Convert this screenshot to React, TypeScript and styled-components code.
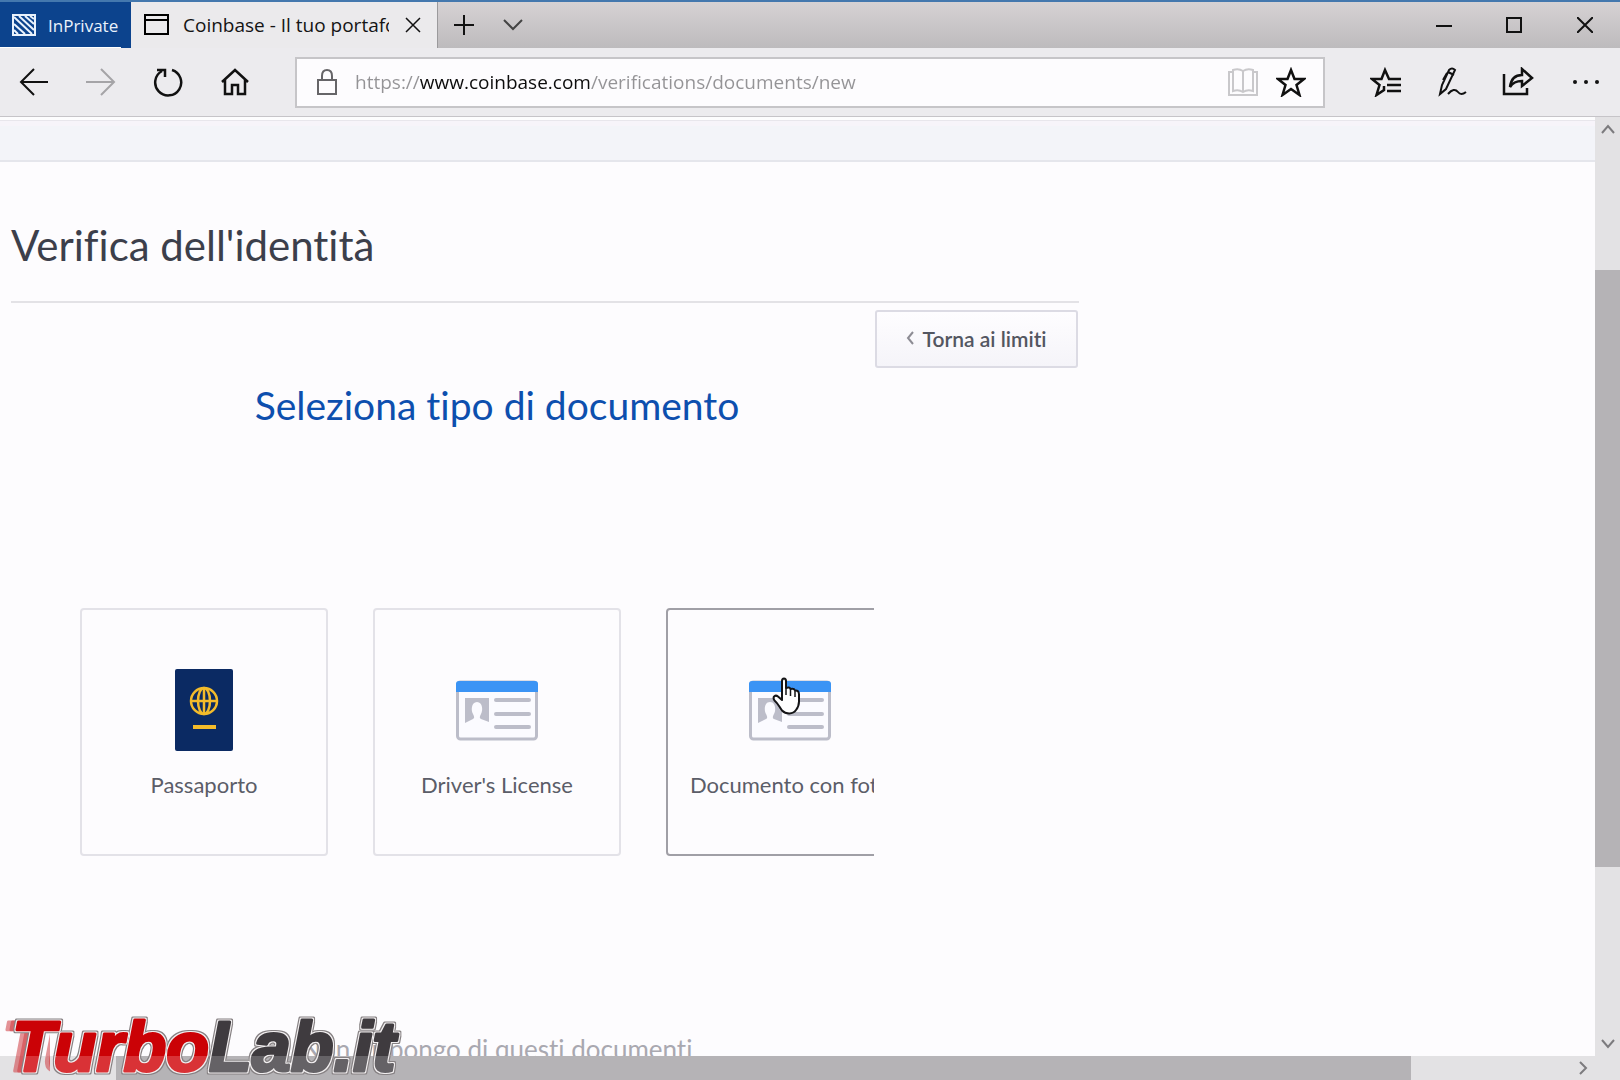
import React from "react";
import styled, { createGlobalStyle, css } from "styled-components";

const uiFont = `"Open Sans", "Noto Sans", sans-serif`;
const pageFont = `Lato, "Open Sans", sans-serif`;

const GlobalStyle = createGlobalStyle`
  *, *::before, *::after { box-sizing: border-box; }
  body { margin: 0; background: #fdfcfe; font-family: ${uiFont}; overflow: hidden; }
  button { font: inherit; color: inherit; cursor: pointer; }
  svg { display: block; flex: none; }
`;

const Window = styled.div`
  height: 100vh;
  display: flex;
  flex-direction: column;
`;

const TabBar = styled.header`
  display: flex;
  height: 48px;
  flex: none;
  border-top: 2px solid #4478ae;
  background: linear-gradient(#d6d2d4, #bdbbbd);
`;

const PrivateBadge = styled.div`
  width: 131px;
  display: flex;
  align-items: center;
  gap: 12px;
  padding: 0 0 0 12px;
  background: linear-gradient(#ffffff, #ffffff) left bottom / 121px 1px no-repeat #0c438d;
  color: #e9f2fc;
  font-size: 17px;
`;

const Tab = styled.div`
  width: 307px;
  display: flex;
  align-items: center;
  padding: 0 15px 0 13px;
  background: #ebeaec;
  border-right: 1px solid #9b9a9c;
`;

const TabTitle = styled.span`
  flex: 1;
  margin: 0 15px 0 14px;
  overflow: hidden;
  white-space: nowrap;
  font-size: 19px;
  line-height: 28px;
  color: #141414;
`;

const IconButton = styled.button<{ $w?: number; $tone?: string }>`
  display: flex;
  align-items: center;
  justify-content: center;
  width: ${(p) => p.$w ?? 32}px;
  height: 100%;
  flex: none;
  padding: 0;
  border: 0;
  background: none;
  color: ${(p) => p.$tone ?? "#111"};
`;

const WindowControls = styled.div`
  display: flex;
  margin-left: auto;
`;

const Toolbar = styled.nav`
  display: flex;
  align-items: center;
  height: 69px;
  flex: none;
  background: #ecebee;
  border-bottom: 1px solid #c6c4c8;
`;

const ToolGroup = styled.div`
  display: flex;
  height: 100%;
`;

const AddressBox = styled.label`
  flex: 1;
  display: flex;
  align-items: center;
  height: 51px;
  margin: 0 27px;
  padding: 0 8px 0 20px;
  background: #fdfcfe;
  border: 2px solid #c6c5c8;
`;

const AddressInput = styled.input`
  flex: 1;
  min-width: 0;
  margin-left: 18px;
  padding: 0;
  border: 0;
  outline: 0;
  font-family: ${uiFont};
  font-size: 19px;
  line-height: 32px;
  color: transparent;
  background: linear-gradient(to right, #949396 65px, #0c0c0c 65px, #0c0c0c 236px, #949396 236px);
  -webkit-background-clip: text;
  background-clip: text;
`;

const Viewport = styled.div`
  flex: 1;
  min-height: 0;
  display: grid;
  grid-template-columns: minmax(0, 1fr) 25px;
  grid-template-rows: minmax(0, 1fr) 24px;
`;

const Page = styled.main`
  overflow: hidden;
  font-family: ${pageFont};
  font-variant-ligatures: none;
  background: #fdfcfe;
`;

const SubHeader = styled.div`
  height: 45px;
  border-top: 3px solid #fdfdfe;
  border-bottom: 2px solid #e5e6ec;
  background: linear-gradient(#e8e6ec 1px, #f7f4fa 1px, #f7f4fa 6px, #f3f4f9 6px);
`;

const Account = styled.section`
  max-width: 1079px;
  padding: 0 0 0 11px;
`;

const Title = styled.h1`
  margin: 0;
  padding: 55px 0 28px;
  border-bottom: 2px solid #e3e2e6;
  font-size: 42px;
  line-height: 56px;
  font-weight: 400;
  color: #3c3f4b;
`;

const Body = styled.div`
  display: flex;
  gap: 1px;
`;

const Panel = styled.div`
  width: 863px;
  flex: none;
  overflow: hidden;
`;

const PanelInner = styled.div`
  width: 972px;
  display: flex;
  flex-direction: column;
  align-items: center;
`;

const StepTitle = styled.h2`
  margin: 76px 0 0;
  font-size: 39px;
  line-height: 52px;
  font-weight: 400;
  color: #0d4fae;
`;

const Options = styled.div`
  display: flex;
  gap: 45px;
  margin-top: 177px;
`;

const Option = styled.button<{ $hovered?: boolean }>`
  width: 248px;
  height: 248px;
  display: flex;
  flex-direction: column;
  align-items: center;
  padding: 59px 0 0;
  background: #fdfcfe;
  border: 2px solid ${(p) => (p.$hovered ? "#a09fa6" : "#e3e2e8")};
  border-radius: 4px;
`;

const OptionLabel = styled.span`
  margin-top: 18px;
  font-size: 22px;
  line-height: 32px;
  white-space: nowrap;
  color: #5b5d68;
`;

const Glyph = styled.span`
  position: relative;
  height: 82px;
  display: flex;
  align-items: center;
`;

const Cursor = styled.svg`
  position: absolute;
  left: 23px;
  top: 8px;
`;

const NoDocuments = styled.a`
  margin-top: 177px;
  font-size: 26px;
  line-height: 32px;
  color: #a9a8b0;
  text-decoration: none;
  white-space: nowrap;
`;

const BackLink = styled.button`
  width: 203px;
  height: 58px;
  margin-top: 7px;
  display: flex;
  align-items: center;
  justify-content: center;
  gap: 8px;
  padding: 0 0 2px;
  border: 2px solid #dcdbe4;
  border-radius: 3px;
  background: linear-gradient(#fefdff, #f5f4f9);
  font-size: 21px;
  font-weight: 600;
  color: #535661;
`;

const track = css`
  display: flex;
  background: #e3e2e4;
`;

const VerticalTrack = styled.div`
  ${track}
  flex-direction: column;
`;

const HorizontalTrack = styled.div`
  ${track}
  grid-column: 1 / 3;
  padding-right: 25px;
`;

const Thumb = styled.div<{ $grow: number }>`
  flex: ${(p) => p.$grow} 0 0;
  background: #b5b3b6;
`;

const Space = styled.div<{ $grow: number }>`
  flex: ${(p) => p.$grow} 0 0;
`;

const ScrollButton = styled.button`
  display: flex;
  align-items: center;
  justify-content: center;
  width: 25px;
  height: 24px;
  flex: none;
  padding: 0;
  border: 0;
  background: none;
  color: #7c7b7e;
`;

const Watermark = styled.svg`
  position: fixed;
  left: 0;
  bottom: 0;
  pointer-events: none;
`;

type IconProps = { w: number; h: number; sw?: number; children: React.ReactNode };

const Icon = ({ w, h, sw = 2, children }: IconProps) => (
  <svg width={w} height={h} viewBox={`0 0 ${w} ${h}`} fill="none" stroke="currentColor" strokeWidth={sw} aria-hidden="true">
    {children}
  </svg>
);

const Chevron = ({ d }: { d: string }) => (
  <Icon w={16} h={16} sw={2}>
    <path d={d} />
  </Icon>
);

const IdCard = () => (
  <svg width="82" height="82" viewBox="0 0 82 82" aria-hidden="true">
    <rect x="1.500" y="13" width="79" height="57" rx="3" fill="#fbfbff" stroke="#bcbdc9" strokeWidth="3" />
    <path d="M0 23V15q0-3 3-3H79q3 0 3 3v8Z" fill="#3b94f5" />
    <path d="M9 29H33V53l-8-3c-2-1-1-3 0-5 2-3 2-12-4-12s-6 9-4 12c1 2 2 4 0 5l-8 4Z" fill="#bcbdc9" />
    <path d="M40 31H73M40 45H73M40 58H73" stroke="#bcbdc9" strokeWidth="4" strokeLinecap="round" />
  </svg>
);

const Passport = () => (
  <svg width="58" height="82" viewBox="0 0 58 82" aria-hidden="true">
    <rect width="58" height="82" rx="2" fill="#0b2a63" />
    <g fill="none" stroke="#f3bb2b" strokeWidth="2.5">
      <circle cx="29" cy="32" r="13" />
      <ellipse cx="29" cy="32" rx="6" ry="13" />
      <path d="M16 32H42M29 19V45" />
    </g>
    <path d="M18 58H41" stroke="#f3bb2b" strokeWidth="4" />
  </svg>
);

const Hand = () => (
  <Cursor width="30" height="40" viewBox="0 0 30 40" aria-hidden="true">
    <path
      d="M10 23V4q0-2.500 2-2.500T14 4V11q3.500-1.500 4.500 1 3.500-1 4.500 1.500 4-.5 4 4v7c0 4-1 6-3 8.500-3 4.500-10 4.500-14 .5-3-4-4-7-7.500-10-2.500-4 1-6 3.500-4Z"
      fill="#fff"
      stroke="#141416"
      strokeWidth="2"
      strokeLinejoin="round"
    />
    <path d="M14 10v8M18.500 12v7M23 14v6" stroke="#141416" strokeWidth="1.500" />
  </Cursor>
);

const starPath = "M15 3L18.500 12H28L20.500 18L23.500 28L15 22L6.500 28L9.500 18L2 12H11.500Z";

const Logo = () => (
  <Watermark width="420" height="76" viewBox="0 0 420 76" role="img" aria-label="TurboLab.it">
    <defs>
      <linearGradient id="red" gradientUnits="userSpaceOnUse" x1="0" y1="18" x2="0" y2="70">
        <stop offset="0.66" stopColor="#cb0206" />
        <stop offset="0.66" stopColor="#d93236" />
      </linearGradient>
      <linearGradient id="dark" gradientUnits="userSpaceOnUse" x1="0" y1="18" x2="0" y2="70">
        <stop offset="0.66" stopColor="#3f3b3f" />
        <stop offset="0.66" stopColor="#656266" />
      </linearGradient>
      <filter id="rim" filterUnits="userSpaceOnUse" x="0" y="0" width="420" height="76" colorInterpolationFilters="sRGB">
        <feMorphology in="SourceAlpha" operator="dilate" radius="2" result="wide" />
        <feMorphology in="SourceAlpha" operator="dilate" radius="1" result="narrow" />
        <feFlood floodColor="#868183" />
        <feComposite in2="wide" operator="in" result="outer" />
        <feFlood floodColor="#f1eeef" />
        <feComposite in2="narrow" operator="in" result="inner" />
        <feFlood floodColor="#cf3a40" floodOpacity="0.55" />
        <feComposite in2="SourceAlpha" operator="in" result="tint" />
        <feOffset in="tint" dx="-6" x="0" y="0" width="50" height="76" result="trailNear" />
        <feOffset in="tint" dx="-10" x="0" y="0" width="50" height="76" result="trailFar" />
        <feMerge>
          <feMergeNode in="trailFar" />
          <feMergeNode in="trailNear" />
          <feMergeNode in="outer" />
          <feMergeNode in="inner" />
          <feMergeNode in="SourceGraphic" />
        </feMerge>
      </filter>
    </defs>
    <text
      x="12"
      y="67"
      filter="url(#rim)"
      fontFamily="'Liberation Sans', Arial, sans-serif"
      fontSize="70"
      fontWeight="700"
      fontStyle="italic"
      strokeWidth="3"
      strokeLinejoin="round"
    >
      <tspan fill="url(#red)" stroke="url(#red)">Turbo</tspan>
      <tspan fill="url(#dark)" stroke="url(#dark)">Lab.it</tspan>
    </text>
  </Watermark>
);

export default function App() {
  return (
    <Window>
      <GlobalStyle />
      <TabBar>
        <PrivateBadge>
          <svg width="24" height="22" viewBox="0 0 24 22" aria-hidden="true">
            <rect x="1" y="1" width="22" height="20" fill="#0c438d" stroke="#e9f2fc" strokeWidth="2" />
            <path d="M2 3L20 20M2 10L13 20M2 16L6 20M7 2L22 16M13 2L22 10M18 2L22 5" stroke="#e9f2fc" strokeWidth="2" />
          </svg>
          InPrivate
        </PrivateBadge>
        <Tab>
          <Icon w={25} h={22}>
            <path d="M1 1H24V20H1ZM1 6H24" />
          </Icon>
          <TabTitle>Coinbase - Il tuo portafoglio</TabTitle>
          <IconButton $w={18} aria-label="Chiudi scheda">
            <Icon w={16} h={16} sw={1.5}>
              <path d="M1 1L15 15M15 1L1 15" />
            </Icon>
          </IconButton>
        </Tab>
        <IconButton $w={52} aria-label="Nuova scheda">
          <Icon w={20} h={20}>
            <path d="M10 0V20M0 10H20" />
          </Icon>
        </IconButton>
        <IconButton $w={46} $tone="#444" aria-label="Elenco schede">
          <Icon w={20} h={12} sw={2}>
            <path d="M1 1L10 10L19 1" />
          </Icon>
        </IconButton>
        <WindowControls>
          <IconButton $w={70} aria-label="Riduci">
            <Icon w={16} h={16}>
              <path d="M0 9H16" />
            </Icon>
          </IconButton>
          <IconButton $w={70} aria-label="Ingrandisci">
            <Icon w={16} h={16}>
              <path d="M1 1H15V15H1Z" />
            </Icon>
          </IconButton>
          <IconButton $w={71} aria-label="Chiudi">
            <Icon w={16} h={16}>
              <path d="M0 0L16 16M16 0L0 16" />
            </Icon>
          </IconButton>
        </WindowControls>
      </TabBar>

      <Toolbar>
        <ToolGroup>
          <IconButton $w={68} aria-label="Indietro">
            <Icon w={30} h={28}>
              <path d="M29 14H2M15 1L2 14L15 27" />
            </Icon>
          </IconButton>
          <IconButton $w={66} $tone="#a5a4a7" aria-label="Avanti">
            <Icon w={30} h={28}>
              <path d="M0 14H28M15 1L28 14L15 27" />
            </Icon>
          </IconButton>
          <IconButton $w={67} aria-label="Aggiorna">
            <Icon w={30} h={30} sw={2.5}>
              <path d="M19 3A13 13 0 1 1 9 4" />
              <path d="M4 3H12V10" />
            </Icon>
          </IconButton>
          <IconButton $w={67} aria-label="Pagina iniziale">
            <Icon w={30} h={30} sw={2.5}>
              <path d="M2 15L15 3L28 15M5 13V27H12V18H18V27H25V13" />
            </Icon>
          </IconButton>
        </ToolGroup>
        <AddressBox>
          <Icon w={20} h={26}>
            <path d="M1 11H19V25H1ZM5 11V7Q5 1 10 1T15 7V11" stroke="#666568" />
          </Icon>
          <AddressInput aria-label="Indirizzo" defaultValue="https://www.coinbase.com/verifications/documents/new" />
          <IconButton $w={48} $tone="#c9c8cb" aria-label="Visualizzazione lettura">
            <Icon w={30} h={28}>
              <path d="M15 3C12 1 8 1 5 2V23C8 22 12 22 15 24C18 22 22 22 25 23V2C22 1 18 1 15 3V24M5 4H1V27H29V4H25" />
            </Icon>
          </IconButton>
          <IconButton $w={48} aria-label="Aggiungi ai preferiti">
            <Icon w={30} h={30} sw={2.5}>
              <path d={starPath} />
            </Icon>
          </IconButton>
        </AddressBox>
        <ToolGroup>
          <IconButton $w={67} aria-label="Hub">
            <Icon w={32} h={30} sw={2.5}>
              <path d="M31 12H19L15 3L11.500 12H2L9.500 18L6.500 28L14 23V19M17 18H31M17 24H31" />
            </Icon>
          </IconButton>
          <IconButton $w={66} aria-label="Note Web">
            <Icon w={30} h={30} sw={2}>
              <path d="M3 27L5 18L12 3Q15 0 18 3L9 22ZM10 6L6 13M11 5L17 8M11 27Q17 20 21 25Q24 29 29 25" />
            </Icon>
          </IconButton>
          <IconButton $w={66} aria-label="Condividi">
            <Icon w={32} h={30} sw={2.5}>
              <path d="M2 7V27H25V21M8 20C9 12 13 8 20 8V2L30 11L20 19V14C15 14 11 15 8 20Z" />
            </Icon>
          </IconButton>
          <IconButton $w={69} aria-label="Altro">
            <Icon w={28} h={6}>
              <g fill="currentColor" stroke="none">
                <circle cx="3" cy="3" r="2" />
                <circle cx="14" cy="3" r="2" />
                <circle cx="25" cy="3" r="2" />
              </g>
            </Icon>
          </IconButton>
        </ToolGroup>
      </Toolbar>

      <Viewport>
        <Page>
          <SubHeader />
          <Account>
            <Title>Verifica dell'identità</Title>
            <Body>
              <Panel>
                <PanelInner>
                  <StepTitle>Seleziona tipo di documento</StepTitle>
                  <Options>
                    <Option>
                      <Glyph>
                        <Passport />
                      </Glyph>
                      <OptionLabel>Passaporto</OptionLabel>
                    </Option>
                    <Option>
                      <Glyph>
                        <IdCard />
                      </Glyph>
                      <OptionLabel>Driver's License</OptionLabel>
                    </Option>
                    <Option $hovered>
                      <Glyph>
                        <IdCard />
                        <Hand />
                      </Glyph>
                      <OptionLabel>Documento con foto</OptionLabel>
                    </Option>
                  </Options>
                  <NoDocuments href="#">Non dispongo di questi documenti</NoDocuments>
                </PanelInner>
              </Panel>
              <BackLink>
                <Icon w={8} h={14} sw={2}>
                  <path d="M7 1L2 7L7 13" stroke="#8d8c94" />
                </Icon>
                Torna ai limiti
              </BackLink>
            </Body>
          </Account>
        </Page>
        <VerticalTrack>
          <ScrollButton aria-label="Scorri su">
            <Chevron d="M2 12L8 5L14 12" />
          </ScrollButton>
          <Space $grow={129} />
          <Thumb $grow={597} />
          <Space $grow={165} />
          <ScrollButton aria-label="Scorri giù">
            <Chevron d="M2 4L8 11L14 4" />
          </ScrollButton>
        </VerticalTrack>
        <HorizontalTrack>
          <Space $grow={116} />
          <Thumb $grow={1295} />
          <Space $grow={159} />
          <ScrollButton aria-label="Scorri a destra">
            <Chevron d="M5 2L11 8L5 14" />
          </ScrollButton>
        </HorizontalTrack>
      </Viewport>
      <Logo />
    </Window>
  );
}
